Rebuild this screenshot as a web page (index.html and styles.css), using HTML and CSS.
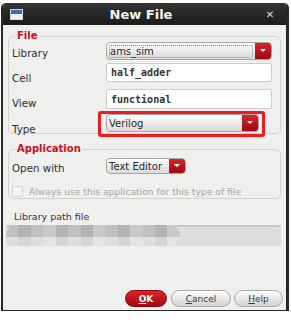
FILE: index.html
```html
<!DOCTYPE html>
<html lang="en">
  <head>
    <meta charset="UTF-8" />
    <title>New File</title>
    <link rel="stylesheet" href="styles.css">
  </head>
  <body>
    <div class="window">
      <div class="titlebar">
        <span class="win-icon"></span>
        <span class="title">New File</span>
        <span class="close">&#x2715;</span>
      </div>
      <div class="content">
        <!-- File group -->
        <fieldset class="group file-group">
          <legend>File</legend>
          <div class="row r-lib">
            <label>Library</label>
            <div class="combo wide">
              <span class="combo-text"><span class="focus">ams_sim</span></span>
              <span class="combo-btn"></span>
            </div>
          </div>
          <div class="row r-cell">
            <label>Cell</label>
            <div class="field mono">half_adder</div>
          </div>
          <div class="row r-view">
            <label>View</label>
            <div class="field mono">functional</div>
          </div>
          <div class="row r-type">
            <label>Type</label>
            <div class="combo type marked">
              <span class="combo-text">Verilog</span>
              <span class="combo-btn"></span>
            </div>
          </div>
        </fieldset>

        <!-- Application group -->
        <fieldset class="group app-group">
          <legend>Application</legend>
          <div class="row r-open">
            <label>Open with</label>
            <div class="combo small">
              <span class="combo-text">Text Editor</span>
              <span class="combo-btn"></span>
            </div>
          </div>
          <div class="check-row">
            <span class="check"></span>
            <span>Always use this application for this type of file</span>
          </div>
        </fieldset>

        <div class="path-label">Library path file</div>
        <div class="path-field">
          <div class="blur">
            <span class="b1"></span><span class="b2"></span><span class="b1"></span><span class="b3"></span><span class="b2"></span><span class="b1"></span><span class="b2"></span><span class="b3"></span><span class="b1"></span><span class="b2"></span><span class="b3"></span><span class="b1"></span><span class="b2"></span><span class="b3"></span>
          </div>
        </div>

        <div class="buttons">
          <button class="btn ok"><u>O</u>K</button>
          <button class="btn cancel"><u>C</u>ancel</button>
          <button class="btn help"><u>H</u>elp</button>
        </div>
      </div>
    </div>
  </body>
</html>
```

FILE: styles.css
```css
body {
  margin: 0;
  background: #ffffff;
  font-family: "DejaVu Sans", sans-serif;
  font-size: 10px;
  color: #2e2e2e;
}

.window {
  margin: 3px 0 0 1px;
  width: 288px;
  box-sizing: border-box;
  border-left: 2px solid #262626;
  border-right: 3px solid #262626;
  border-bottom: 1px solid #262626;
  border-radius: 5px 5px 0 0;
  overflow: hidden;
}

.titlebar {
  height: 22px;
  background: linear-gradient(#353535, #1b1b1b);
  display: flex;
  align-items: center;
  color: #f4f4f4;
}

.win-icon {
  width: 13px;
  height: 11px;
  margin-left: 7px;
  background: linear-gradient(#3c6cb4 0 4px, #eef2f8 4px);
  border: 1px solid #c9d3e2;
  box-sizing: border-box;
}

.title {
  flex: 1;
  text-align: center;
  font-weight: bold;
  font-size: 13px;
  padding-right: 4px;
}

.close {
  width: 14px;
  text-align: center;
  font-weight: bold;
  font-size: 10px;
  color: #dcdcdc;
  margin-right: 9px;
}

.content {
  background: #efefed;
  padding: 5px 5px 3px 5px;
  height: 285px;
  box-sizing: border-box;
  display: flex;
  flex-direction: column;
}

.group {
  margin: 0;
  padding: 0 8px 1px 3px;
  border: 1px solid #d3d3d1;
  border-radius: 5px;
  min-inline-size: 0;
}

.group legend {
  color: #c8101c;
  font-weight: bold;
  font-size: 10px;
  line-height: 12px;
  padding: 0 2px;
  margin-left: 3px;
}

.row {
  display: flex;
  align-items: center;
}

.row label {
  width: 94px;
  flex-shrink: 0;
  font-size: 10.3px;
}

.r-lib { height: 18px; }
.r-lib label { padding-top: 4px; }
.r-cell { height: 19px; margin-top: 3px; }
.r-cell label { padding-top: 11px; }
.r-view { height: 20px; margin-top: 7px; }
.r-view label { padding-top: 8px; }
.r-type { height: 18px; margin-top: 5px; }
.r-type label { padding-top: 12px; }

.combo {
  height: 18px;
  display: flex;
  border: 1px solid #a6a6a6;
  border-radius: 4px;
  background: linear-gradient(#fdfdfd, #dadada);
  box-sizing: border-box;
  overflow: hidden;
}

.combo.wide {
  width: 166px;
}

.combo.type {
  width: 153px;
}

.combo.small {
  width: 80px;
  height: 16px;
}

.combo-text {
  flex: 1;
  padding-left: 2px;
  display: flex;
  align-items: center;
  color: #2a2a2a;
  white-space: nowrap;
}

.focus {
  flex: 1;
  border: 1px dotted #8a8a8a;
  border-radius: 2px;
  line-height: 11px;
  margin-right: 2px;
}

.combo-btn {
  width: 16px;
  flex-shrink: 0;
  background: linear-gradient(#d9232b, #9a0a10);
  position: relative;
}

.combo-btn::after {
  content: "";
  position: absolute;
  left: 5px;
  top: 6px;
  border-left: 3px solid transparent;
  border-right: 3px solid transparent;
  border-top: 3px solid #ffffff;
}

.small .combo-btn::after {
  top: 5px;
}

/* red annotation drawn around the Type box */
.marked {
  position: relative;
  overflow: visible;
}

.marked::before {
  content: "";
  position: absolute;
  left: -9px;
  right: -7px;
  top: -4px;
  bottom: -6px;
  border: 3px solid #f01c1c;
  border-radius: 3px;
}

.marked .combo-btn {
  border-radius: 0 3px 3px 0;
}

.field {
  width: 166px;
  height: 100%;
  background: #ffffff;
  border: 1px solid #cbcbcb;
  border-radius: 2px;
  box-sizing: border-box;
  padding-left: 4px;
  display: flex;
  align-items: center;
}

.mono {
  font-family: "DejaVu Sans Mono", monospace;
  font-weight: bold;
  font-size: 10px;
  color: #353535;
}

.app-group {
  margin-top: 9px;
}

.r-open {
  height: 16px;
  margin-top: 3px;
}

.r-open label {
  padding-top: 4px;
}

.check-row {
  display: flex;
  align-items: center;
  gap: 6px;
  color: #a8a8a8;
  font-size: 9.2px;
  height: 12px;
  margin-top: 11px;
  white-space: nowrap;
}

.check {
  width: 11px;
  height: 11px;
  box-sizing: border-box;
  border: 1px solid #d6d6d6;
  border-radius: 2px;
  background: #f4f4f4;
}

.path-label {
  margin: 12px 0 0 6px;
  font-size: 9.5px;
  line-height: 12px;
  color: #363636;
}

.path-field {
  margin: 2px 0 0 -2px;
  height: 21px;
  width: 275px;
  background: #dddddd;
  border-top: 2px solid #c6c6c6;
  border-radius: 3px;
  box-sizing: border-box;
}

.blur {
  display: flex;
  height: 21px;
  width: 174px;
  margin-top: -2px;
  border-radius: 10px;
  overflow: hidden;
}

.blur span {
  flex: 1;
  background: linear-gradient(#c0c0c0 55%, #dedede 55%);
}

.blur .b2 {
  background: linear-gradient(#b4b4b4 55%, #d6d6d6 55%);
}

.blur .b3 {
  background: linear-gradient(#c9c9c9 55%, #e3e3e3 55%);
}

.buttons {
  margin-top: auto;
  margin-right: -2px;
  display: flex;
  justify-content: flex-end;
  gap: 4px;
}

.btn {
  font-family: "DejaVu Sans", sans-serif;
  font-size: 9px;
  height: 17px;
  padding: 0;
  border: 1px solid #a8a8a8;
  border-radius: 9px;
  background: linear-gradient(#fcfcfc, #d4d4d4);
  color: #3a3a3a;
}

.btn.ok {
  width: 42px;
  background: linear-gradient(#df222a, #a00a10);
  border-color: #8a0a0a;
  color: #ffffff;
  font-weight: bold;
}

.btn.cancel {
  width: 60px;
}

.btn.help {
  width: 49px;
  margin-left: -1px;
}
```
